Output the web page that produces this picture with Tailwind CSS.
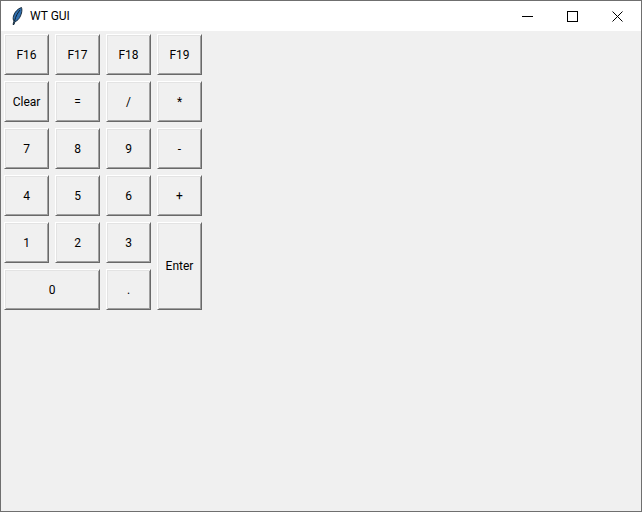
<!DOCTYPE html>
<html lang="en">
<head>
  <meta charset="UTF-8">
  <title>WT GUI</title>
  <script src="https://cdn.jsdelivr.net/npm/@tailwindcss/browser@4"></script>
</head>
<body class="bg-[#f0f0f0] font-['Roboto',sans-serif] text-[12px] text-black">
  <div class="w-[642px] h-[512px] flex flex-col border border-[#6f6f6f]">
    <!-- title bar -->
    <div class="h-[30px] bg-white flex items-center">
      <svg class="ml-[10px] w-[12px] h-[18px]" viewBox="0 0 12 18">
        <path d="M10.5 .5C7 1.5 3.5 5 2.5 9 2 11 2 13 3 14L2 17.5 3 17.5 4 14.5C7 14 9.5 10 10.5 6 11 4 11 2 10.5 .5Z" fill="#2f6fb0" stroke="#10202c" stroke-width=".9"/>
        <path d="M9 3C7 5.5 5 8.5 3.5 14" stroke="#10202c" stroke-width="1" fill="none"/>
      </svg>
      <span class="ml-[7px]">WT GUI</span>
      <div class="ml-auto mr-px flex">
        <button class="w-[45px] h-[30px] flex items-center justify-center">
          <svg class="w-[11px] h-[11px]" viewBox="0 0 11 11"><path d="M0 5.5H11" stroke="#000" stroke-width="1"/></svg>
        </button>
        <button class="w-[45px] h-[30px] flex items-center justify-center">
          <svg class="w-[11px] h-[11px]" viewBox="0 0 11 11"><rect x="0.5" y="0.5" width="10" height="10" fill="none" stroke="#000" stroke-width="1"/></svg>
        </button>
        <button class="w-[45px] h-[30px] flex items-center justify-center">
          <svg class="w-[11px] h-[11px]" viewBox="0 0 11 11"><path d="M0.5 0.5L10.5 10.5M10.5 0.5L0.5 10.5" stroke="#000" stroke-width="1"/></svg>
        </button>
      </div>
    </div>
    <!-- keypad -->
    <div class="grid grid-cols-[repeat(4,45px)] auto-rows-[41px] gap-x-[6px] gap-y-[6px] pl-[3px] pt-[3px]">
      <button class="flex items-center justify-center border border-t-white border-l-white border-r-[#696969] border-b-[#696969] shadow-[inset_1px_1px_0_#e3e3e3,inset_-1px_-1px_0_#a0a0a0]">F16</button>
      <button class="flex items-center justify-center border border-t-white border-l-white border-r-[#696969] border-b-[#696969] shadow-[inset_1px_1px_0_#e3e3e3,inset_-1px_-1px_0_#a0a0a0]">F17</button>
      <button class="flex items-center justify-center border border-t-white border-l-white border-r-[#696969] border-b-[#696969] shadow-[inset_1px_1px_0_#e3e3e3,inset_-1px_-1px_0_#a0a0a0]">F18</button>
      <button class="flex items-center justify-center border border-t-white border-l-white border-r-[#696969] border-b-[#696969] shadow-[inset_1px_1px_0_#e3e3e3,inset_-1px_-1px_0_#a0a0a0]">F19</button>
      <button class="flex items-center justify-center border border-t-white border-l-white border-r-[#696969] border-b-[#696969] shadow-[inset_1px_1px_0_#e3e3e3,inset_-1px_-1px_0_#a0a0a0]">Clear</button>
      <button class="flex items-center justify-center border border-t-white border-l-white border-r-[#696969] border-b-[#696969] shadow-[inset_1px_1px_0_#e3e3e3,inset_-1px_-1px_0_#a0a0a0]">=</button>
      <button class="flex items-center justify-center border border-t-white border-l-white border-r-[#696969] border-b-[#696969] shadow-[inset_1px_1px_0_#e3e3e3,inset_-1px_-1px_0_#a0a0a0]">/</button>
      <button class="flex items-center justify-center border border-t-white border-l-white border-r-[#696969] border-b-[#696969] shadow-[inset_1px_1px_0_#e3e3e3,inset_-1px_-1px_0_#a0a0a0]">*</button>
      <button class="flex items-center justify-center border border-t-white border-l-white border-r-[#696969] border-b-[#696969] shadow-[inset_1px_1px_0_#e3e3e3,inset_-1px_-1px_0_#a0a0a0]">7</button>
      <button class="flex items-center justify-center border border-t-white border-l-white border-r-[#696969] border-b-[#696969] shadow-[inset_1px_1px_0_#e3e3e3,inset_-1px_-1px_0_#a0a0a0]">8</button>
      <button class="flex items-center justify-center border border-t-white border-l-white border-r-[#696969] border-b-[#696969] shadow-[inset_1px_1px_0_#e3e3e3,inset_-1px_-1px_0_#a0a0a0]">9</button>
      <button class="flex items-center justify-center border border-t-white border-l-white border-r-[#696969] border-b-[#696969] shadow-[inset_1px_1px_0_#e3e3e3,inset_-1px_-1px_0_#a0a0a0]">-</button>
      <button class="flex items-center justify-center border border-t-white border-l-white border-r-[#696969] border-b-[#696969] shadow-[inset_1px_1px_0_#e3e3e3,inset_-1px_-1px_0_#a0a0a0]">4</button>
      <button class="flex items-center justify-center border border-t-white border-l-white border-r-[#696969] border-b-[#696969] shadow-[inset_1px_1px_0_#e3e3e3,inset_-1px_-1px_0_#a0a0a0]">5</button>
      <button class="flex items-center justify-center border border-t-white border-l-white border-r-[#696969] border-b-[#696969] shadow-[inset_1px_1px_0_#e3e3e3,inset_-1px_-1px_0_#a0a0a0]">6</button>
      <button class="flex items-center justify-center border border-t-white border-l-white border-r-[#696969] border-b-[#696969] shadow-[inset_1px_1px_0_#e3e3e3,inset_-1px_-1px_0_#a0a0a0]">+</button>
      <button class="flex items-center justify-center border border-t-white border-l-white border-r-[#696969] border-b-[#696969] shadow-[inset_1px_1px_0_#e3e3e3,inset_-1px_-1px_0_#a0a0a0]">1</button>
      <button class="flex items-center justify-center border border-t-white border-l-white border-r-[#696969] border-b-[#696969] shadow-[inset_1px_1px_0_#e3e3e3,inset_-1px_-1px_0_#a0a0a0]">2</button>
      <button class="flex items-center justify-center border border-t-white border-l-white border-r-[#696969] border-b-[#696969] shadow-[inset_1px_1px_0_#e3e3e3,inset_-1px_-1px_0_#a0a0a0]">3</button>
      <button class="row-span-2 flex items-center justify-center border border-t-white border-l-white border-r-[#696969] border-b-[#696969] shadow-[inset_1px_1px_0_#e3e3e3,inset_-1px_-1px_0_#a0a0a0]">Enter</button>
      <button class="col-span-2 flex items-center justify-center border border-t-white border-l-white border-r-[#696969] border-b-[#696969] shadow-[inset_1px_1px_0_#e3e3e3,inset_-1px_-1px_0_#a0a0a0]">0</button>
      <button class="flex items-center justify-center border border-t-white border-l-white border-r-[#696969] border-b-[#696969] shadow-[inset_1px_1px_0_#e3e3e3,inset_-1px_-1px_0_#a0a0a0]">.</button>
    </div>
  </div>
</body>
</html>
